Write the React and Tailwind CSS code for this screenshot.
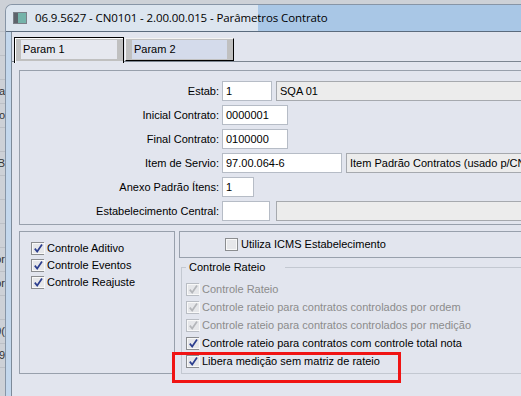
import React from "react";

const Check = ({ checked, disabled }) => (
	<span
		className={`w-[13px] h-[13px] shrink-0 border flex ${
			disabled ? "border-[#b9bdc4]" : "border-[#8b8d90]"
		}`}
	>
		<span className="flex-1 border border-[#f8f8f8] bg-[#e6e7ea] flex items-center justify-center">
			{checked && (
				<svg width="11" height="11" viewBox="0 0 11 11" className="shrink-0">
					<path
						d="M1.8 5.6 L4.2 8.6 L9 1.6"
						fill="none"
						stroke={disabled ? "#b4b6ba" : "#2c3e8e"}
						strokeWidth="1.7"
					/>
				</svg>
			)}
		</span>
	</span>
);

const CheckRow = ({ label, checked, disabled, className = "" }) => (
	<div className={`flex items-center gap-[3px] leading-[13px] ${className}`}>
		<Check checked={checked} disabled={disabled} />
		<span className={`whitespace-nowrap ${disabled ? "text-[#8c8c8c]" : "text-black"}`}>
			{label}
		</span>
	</div>
);

const Input = ({ value, className = "" }) => (
	<div
		className={`h-[20px] shrink-0 border border-[#b6bcc6] bg-white pl-[3px] leading-[18px] ${className}`}
	>
		{value}
	</div>
);

const ReadOnly = ({ value, className = "" }) => (
	<div
		className={`h-[20px] shrink-0 border border-[#a6a9ae] bg-[#ececec] pl-[3px] leading-[18px] whitespace-nowrap overflow-hidden ${className}`}
	>
		{value}
	</div>
);

const bgRows = ["", "", "", "a", "lo", "", "B", "", "", "", "or", "or", "", "9(", "9"];

export default function App() {
	return (
		<div className="relative w-[521px] h-[396px] overflow-hidden bg-[#cdd1d7] flex font-['Liberation_Sans',Arial,sans-serif] text-[11px] text-black">
			{/* janela ao fundo */}
			<div className="w-[5px] shrink-0 flex flex-col pt-[8px]">
				{bgRows.map((t, i) => (
					<div
						key={i}
						className="h-[24px] flex items-center justify-end overflow-hidden border-b border-[#bcc0c6] whitespace-nowrap text-[#333]"
					>
						{t}
					</div>
				))}
			</div>

			{/* janela */}
			<div className="w-[620px] shrink-0 mt-[4px] flex flex-col rounded-tl-[7px] overflow-hidden border-l border-t border-[#8795a6]">
				{/* barra de título */}
				<div className="h-[27px] shrink-0 flex border-b border-[#5b6b7d]">
					<div className="relative z-10 w-[252px] shrink-0 h-full flex items-center pl-[7px] bg-[#dce5ef]">
						<div className="w-[14px] h-[12px] shrink-0 border border-[#7a8088] flex mr-[8px]">
							<div className="w-[4px] bg-[#5d646c]" />
							<div className="flex-1 bg-[#74b3aa]" />
						</div>
						<span className="font-['Open_Sans',sans-serif] text-[11.5px] text-black tracking-[-0.1px] whitespace-nowrap">
							06.9.5627 - CN0101 - 2.00.00.015 - Parâmetros Contrato
						</span>
					</div>
					<div className="flex-1 h-full bg-[#a9c7e6]" />
				</div>

				<div className="flex flex-1">
					{/* moldura esquerda */}
					<div className="w-[6px] shrink-0 bg-[#c3d7ec] border-r border-[#7d8a99]" />

					{/* área cliente */}
					<div className="flex-1 bg-[#e2e5ee] flex flex-col">
						{/* abas */}
						<div className="h-[29px] flex items-end pl-[2px] gap-[1px]">
							<div className="relative z-10 w-[110px] h-[26px] -mb-[2px] border border-b-0 border-black bg-[#e2e5ee]">
								<div className="h-full border-t border-l border-white">
									<div className="h-[22px] border-l-[5px] border-r-[6px] border-t-[1px] border-b-[2px] border-[#c0c0c0] bg-[#e6e8ef] pl-[2px] flex items-center">
										Param 1
									</div>
								</div>
							</div>
							<div className="w-[109px] h-[23px] border border-t-[#f4f4f4] border-l-[#f4f4f4] border-r-black border-b-black">
								<div className="h-full border-l-[6px] border-r-[6px] border-t-[1px] border-b-[1px] border-[#c0c0c0] bg-[#d4dbeb] pl-[2px] flex items-center">
									Param 2
								</div>
							</div>
						</div>

						{/* painel da aba */}
						<div className="border-t border-[#7c8591] flex-1 flex flex-col pl-[7px] pt-[8px]">
							{/* campos */}
							<div className="border border-[#98a0ac] grid grid-cols-[199px_auto] gap-x-[3px] gap-y-[4px] items-center pt-[10px] pb-[3px]">
								<span className="text-right">Estab:</span>
								<div className="flex gap-[4px]">
									<Input className="w-[50px]" value="1" />
									<ReadOnly className="w-[400px]" value="SQA 01" />
								</div>

								<span className="text-right">Inicial Contrato:</span>
								<div className="flex">
									<Input className="w-[66px]" value="0000001" />
								</div>

								<span className="text-right">Final Contrato:</span>
								<div className="flex">
									<Input className="w-[66px]" value="0100000" />
								</div>

								<span className="text-right">Item de Servio:</span>
								<div className="flex gap-[4px]">
									<Input className="w-[120px]" value="97.00.064-6" />
									<ReadOnly
										className="w-[300px]"
										value="Item Padrão Contratos (usado p/CN0101)"
									/>
								</div>

								<span className="text-right">Anexo Padrão Ítens:</span>
								<div className="flex">
									<Input className="w-[32px]" value="1" />
								</div>

								<span className="text-right">Estabelecimento Central:</span>
								<div className="flex gap-[6px]">
									<Input className="w-[48px]" value="" />
									<ReadOnly className="w-[400px]" value="" />
								</div>
							</div>

							{/* painéis inferiores */}
							<div className="flex gap-[4px] mt-[6px]">
								<div className="w-[156px] h-[143px] shrink-0 border border-[#98a0ac] pt-[10px] pl-[11px] flex flex-col gap-[4px]">
									<CheckRow label="Controle Aditivo" checked />
									<CheckRow label="Controle Eventos" checked />
									<CheckRow label="Controle Reajuste" checked />
								</div>

								<div className="flex-1 flex flex-col">
									<div className="h-[27px] border border-[#98a0ac] pl-[45px] flex items-center">
										<CheckRow label="Utiliza ICMS Estabelecimento" />
									</div>

									<fieldset className="ml-[2px] mt-[3px] h-[113px] border border-[#c3c8d1] px-[4px] flex flex-col">
										<legend className="pl-[3px] pr-[20px] leading-[13px]">Controle Rateio</legend>
										<div className="flex flex-col gap-[5px] pt-[9px]">
											<CheckRow label="Controle Rateio" checked disabled />
											<CheckRow
												label="Controle rateio para contratos controlados por ordem"
												checked
												disabled
											/>
											<CheckRow
												label="Controle rateio para contratos controlados por medição"
												checked
												disabled
											/>
											<CheckRow
												label="Controle rateio para contratos com controle total nota"
												checked
											/>
											<CheckRow label="Libera medição sem matriz de rateio" checked />
										</div>
									</fieldset>
								</div>
							</div>
						</div>
					</div>
				</div>
			</div>

			{/* destaque vermelho */}
			<div className="absolute left-[172px] top-[352px] w-[229px] h-[31px] border-[3px] border-[#f01414]" />
		</div>
	);
}
